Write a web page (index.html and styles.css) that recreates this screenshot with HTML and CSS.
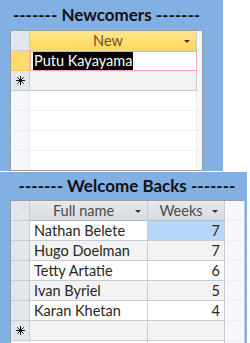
FILE: index.html
```html
<!DOCTYPE html>
<html lang="en">
<head>
    <meta charset="UTF-8">
    <title>Newcomers and Welcome Backs</title>
    <link rel="stylesheet" href="styles.css">
</head>
<body>
    <!-- Newcomers form -->
    <div class="panel panel-top">
        <div class="title">------- Newcomers -------</div>
        <div class="sheet sheet-new">
            <div class="row head">
                <div class="sel corner"></div>
                <div class="cell hdr hdr-active">New<span class="arrow"></span></div>
                <div class="cell fill"></div>
            </div>
            <div class="row">
                <div class="sel sel-current"></div>
                <div class="cell editing"><span class="picked">Putu Kayayama</span></div>
                <div class="cell fill"></div>
            </div>
            <div class="row newrow">
                <div class="sel">
                    <svg class="star" width="9" height="9" viewBox="0 0 9 9"><path d="M4.5 0V9M0 4.5H9M1.3 1.3L7.7 7.7M7.7 1.3L1.3 7.7" stroke="#111" stroke-width="1"/></svg>
                </div>
                <div class="cell"></div>
                <div class="cell fill"></div>
            </div>
            <div class="row empty"><div class="sel"></div><div class="cell"></div><div class="cell fill"></div></div>
            <div class="row empty"><div class="sel"></div><div class="cell"></div><div class="cell fill"></div></div>
            <div class="row empty"><div class="sel"></div><div class="cell"></div><div class="cell fill"></div></div>
            <div class="row empty"><div class="sel"></div><div class="cell"></div><div class="cell fill"></div></div>
        </div>
    </div>

    <!-- Welcome backs form -->
    <div class="panel panel-bottom">
        <div class="title">------- Welcome Backs -------</div>
        <div class="sheet sheet-back">
            <div class="row head">
                <div class="sel corner"></div>
                <div class="cell hdr">Full name<span class="arrow"></span></div>
                <div class="cell hdr">Weeks<span class="arrow"></span></div>
                <div class="cell fill"></div>
            </div>
            <div class="row">
                <div class="sel"></div>
                <div class="cell">Nathan Belete</div>
                <div class="cell num focus">7</div>
                <div class="cell fill"></div>
            </div>
            <div class="row alt">
                <div class="sel"></div>
                <div class="cell">Hugo Doelman</div>
                <div class="cell num">7</div>
                <div class="cell fill"></div>
            </div>
            <div class="row">
                <div class="sel"></div>
                <div class="cell">Tetty Artatie</div>
                <div class="cell num">6</div>
                <div class="cell fill"></div>
            </div>
            <div class="row alt">
                <div class="sel"></div>
                <div class="cell">Ivan Byriel</div>
                <div class="cell num">5</div>
                <div class="cell fill"></div>
            </div>
            <div class="row">
                <div class="sel"></div>
                <div class="cell">Karan Khetan</div>
                <div class="cell num">4</div>
                <div class="cell fill"></div>
            </div>
            <div class="row newrow">
                <div class="sel">
                    <svg class="star" width="9" height="9" viewBox="0 0 9 9"><path d="M4.5 0V9M0 4.5H9M1.3 1.3L7.7 7.7M7.7 1.3L1.3 7.7" stroke="#111" stroke-width="1"/></svg>
                </div>
                <div class="cell"></div>
                <div class="cell"></div>
                <div class="cell fill"></div>
            </div>
            <div class="row empty"><div class="sel"></div><div class="cell"></div><div class="cell"></div><div class="cell fill"></div></div>
        </div>
    </div>
</body>
</html>
```

FILE: styles.css
```css
* {
    margin: 0;
    padding: 0;
    box-sizing: border-box;
}

body {
    background: #fff;
    font-family: 'Lato', 'Open Sans', sans-serif;
    width: 250px;
    height: 343px;
    overflow: hidden;
}

.panel {
    background: #83b0e3;
    padding-left: 10px;
}

.panel-top {
    width: 223px;
    height: 171px;
    overflow: hidden;
}

.panel-bottom {
    width: 247px;
    height: 171px;
    margin-top: 1px;
    overflow: hidden;
}

.title {
    font-weight: bold;
    font-size: 17px;
    color: #111;
    text-align: center;
    white-space: nowrap;
}

.panel-top .title {
    width: 193px;
    height: 30px;
    line-height: 29px;
}

.panel-bottom .title {
    width: 234px;
    height: 28px;
    line-height: 28px;
}

.sheet {
    background: #fff;
    border: 1px solid #9d9d9d;
    font-size: 14.5px;
    color: #262626;
    overflow: hidden;
}

.sheet-new {
    width: 193px;
    height: 141px;
}

.sheet-back {
    width: 235px;
    border-right-color: #c7cdd6;
}

.row {
    display: grid;
    height: 20px;
}

.sheet-new .row {
    grid-template-columns: 19px 167px 5px;
}

.sheet-back .row {
    grid-template-columns: 19px 118px 77px 19px;
}

.sel {
    background: #e3e6ea;
    border-right: 1px solid #c5ccd6;
    border-bottom: 1px solid #c5ccd6;
    display: flex;
    align-items: center;
    justify-content: center;
}

.star {
    display: block;
}

.cell {
    border-right: 1px solid #c5ccd6;
    border-bottom: 1px solid #c5ccd6;
    padding: 0 4px;
    line-height: 19px;
    white-space: nowrap;
    overflow: hidden;
    position: relative;
}

.cell.fill {
    border-right: none;
    background: #f6f8fe;
    border-bottom-color: #eceff5;
}

.num {
    text-align: right;
}

.alt .cell:not(.fill) {
    background: #f2f2f2;
}

.focus {
    background: #b6d7f9;
}

/* header row */
.head .cell.hdr {
    background: linear-gradient(#e6e9ed, #d8dce2);
    text-align: center;
    color: #4a4a4a;
    padding-right: 14px;
    border-bottom-color: #b5bcc7;
}

.head .cell.hdr-active {
    background: linear-gradient(#ffe68f, #ffd659);
    color: #6b5526;
    border-bottom-color: #e8d7a8;
}

.head .fill {
    background: #f6f8fe;
}

.corner {
    background: linear-gradient(135deg, #e3e6ea 48%, #d3d7dd 50%, #f4f5f7 53%, #e3e6ea 56%) no-repeat;
    background-color: #e3e6ea;
    background-size: 12px 12px;
    background-position: 3px 5px;
}

.arrow {
    position: absolute;
    right: 6px;
    top: 9px;
    border-left: 3px solid transparent;
    border-right: 3px solid transparent;
    border-top: 3px solid #333;
}

/* current record */
.sel-current {
    background: #ffdb6e;
    border-bottom-color: #f0c85a;
}

.editing {
    border: 1px solid #f4a3ad;
    padding-left: 2px;
    line-height: 18px;
}

.picked {
    background: #000;
    color: #fff;
    padding: 1px;
}

.newrow .cell:not(.fill) {
    background: #f2f2f2;
}

/* blank area below the records */
.empty .sel {
    background: #f5f7fd;
    border-right-color: #e8ebf2;
    border-bottom-color: #e8ebf2;
}

.empty .cell {
    border-right-color: #eceff5;
    border-bottom-color: #eceff5;
}

.sheet-back .empty .cell {
    border-right-color: #c5ccd6;
}
```
